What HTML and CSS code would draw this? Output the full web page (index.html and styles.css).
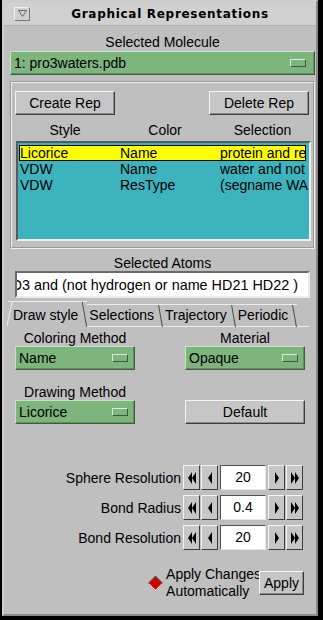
FILE: index.html
```html
<!DOCTYPE html>
<html lang="en">
<head>
    <meta charset="UTF-8">
    <title>Graphical Representations</title>
    <link rel="stylesheet" href="styles.css">
</head>
<body>
    <div class="window">
        <!-- Title bar -->
        <div class="titlebar">
            <span class="collapse">
                <svg width="9" height="7" viewBox="0 0 9 7"><polygon points="0.5,0.5 8.5,0.5 4.5,6.5" fill="none" stroke="#666" stroke-width="1"/></svg>
            </span>
            <span class="title">Graphical Representations</span>
        </div>

        <div class="content">
            <div class="label">Selected Molecule</div>
            <div class="menu wide"><span>1: pro3waters.pdb</span><i class="ind"></i></div>

            <!-- Reps group -->
            <div class="group">
                <div class="btn-row">
                    <div class="btn rep-btn">Create Rep</div>
                    <div class="btn rep-btn">Delete Rep</div>
                </div>
                <div class="list-head"><span>Style</span><span>Color</span><span>Selection</span></div>
                <div class="listbox">
                    <div class="row sel"><span>Licorice</span><span>Name</span><span>protein and re</span></div>
                    <div class="row"><span>VDW</span><span>Name</span><span>water and not</span></div>
                    <div class="row"><span>VDW</span><span>ResType</span><span>(segname WA</span></div>
                </div>
            </div>

            <div class="label atoms-label">Selected Atoms</div>
            <div class="entry"><span>O3 and (not hydrogen or name HD21 HD22 )</span></div>

            <!-- Tabs -->
            <div class="tabs">
                <div class="tab active">Draw style</div>
                <div class="tab">Selections</div>
                <div class="tab">Trajectory</div>
                <div class="tab">Periodic</div>
                <div class="tab-rest"></div>
            </div>

            <div class="page">
                <div class="opts">
                    <div class="opt">
                        <div class="label">Coloring Method</div>
                        <div class="menu"><span>Name</span><i class="ind"></i></div>
                    </div>
                    <div class="opt">
                        <div class="label">Material</div>
                        <div class="menu"><span>Opaque</span><i class="ind"></i></div>
                    </div>
                    <div class="opt">
                        <div class="label">Drawing Method</div>
                        <div class="menu"><span>Licorice</span><i class="ind"></i></div>
                    </div>
                    <div class="opt">
                        <div class="label">&nbsp;</div>
                        <div class="btn">Default</div>
                    </div>
                </div>

                <div class="spinners" id="spinners"></div>

                <div class="apply-row">
                    <span class="radio"></span>
                    <span class="apply-text">Apply Changes<br>Automatically</span>
                    <div class="btn apply-btn">Apply</div>
                </div>
            </div>
        </div>
    </div>

    <script src="app.js"></script>
</body>
</html>
```

FILE: app.js
```js
// build the three counter rows
const rows = [
    { label: 'Sphere Resolution', value: '20' },
    { label: 'Bond Radius', value: '0.4' },
    { label: 'Bond Resolution', value: '20' }
];

const single = '<svg width="6" height="14" viewBox="0 0 6 14"><polygon points="1,1 5,7 1,13" fill="#000"/></svg>';
const double = '<svg width="10" height="14" viewBox="0 0 10 14"><polygon points="1,1 5,7 1,13" fill="#000"/><polygon points="5,1 9,7 5,13" fill="#000"/></svg>';

const box = document.getElementById('spinners');
rows.forEach(r => {
    const row = document.createElement('div');
    row.classList.add('spin-row');
    row.innerHTML = `
        <span class="spin-label">${r.label}</span>
        <span class="arrow flip">${double}</span>
        <span class="arrow flip">${single}</span>
        <span class="spin-value">${r.value}</span>
        <span class="arrow">${single}</span>
        <span class="arrow">${double}</span>
    `;
    box.appendChild(row);
});
```

FILE: styles.css
```css
body {
    margin: 0;
    background-color: #000;
    font-family: 'Liberation Sans', Arial, sans-serif;
    font-size: 14px;
    color: #000;
}

.window {
    box-sizing: border-box;
    width: 316px;
    height: 616px;
    margin-left: 2px;
    background-color: #bfbfbf;
    border: 2px solid #cdcdcd;
    border-right-color: #8a8a8a;
    border-bottom-color: #8a8a8a;
}

.titlebar {
    display: flex;
    align-items: center;
    height: 23px;
    background-color: #d0d0d0;
    border-bottom: 1px solid #b4b4b4;
}

.collapse {
    display: flex;
    align-items: center;
    justify-content: center;
    box-sizing: border-box;
    width: 16px;
    height: 14px;
    margin-left: 10px;
    border: 1px solid #f0f0f0;
    border-right-color: #777;
    border-bottom-color: #777;
}

.title {
    flex: 1;
    text-align: center;
    padding-right: 6px;
    font-family: 'DejaVu Sans', sans-serif;
    font-weight: bold;
    font-size: 12px;
    letter-spacing: 0.7px;
}

.content {
    padding-left: 6px;
}

.label {
    text-align: center;
    height: 17px;
    line-height: 17px;
}

.content > .label:first-child {
    margin-top: 8px;
    width: 305px;
}

/* green option menus */
.menu {
    display: flex;
    align-items: center;
    justify-content: space-between;
    box-sizing: border-box;
    height: 24px;
    padding: 0 6px 0 3px;
    background-color: #7db57d;
    border: 1px solid #c4e2c4;
    border-right-color: #3e5e3e;
    border-bottom-color: #3e5e3e;
    box-shadow: inset -1px -1px 0 #5f8d5f;
}

.menu.wide {
    width: 305px;
    padding-right: 8px;
}

.ind {
    display: block;
    box-sizing: border-box;
    width: 16px;
    height: 8px;
    border: 1px solid #d6ecd6;
    border-right-color: #3a5a3a;
    border-bottom-color: #3a5a3a;
}

.group {
    box-sizing: border-box;
    width: 305px;
    height: 168px;
    margin-top: 6px;
    padding: 8px 3px 0 3px;
    border: 2px groove #eee;
}

.btn-row {
    display: flex;
    justify-content: space-between;
    padding-right: 1px;
}

.btn {
    box-sizing: border-box;
    height: 24px;
    line-height: 22px;
    text-align: center;
    background-color: #c6c6c6;
    border: 1px solid #f4f4f4;
    border-right-color: #3c3c3c;
    border-bottom-color: #3c3c3c;
    box-shadow: inset -1px -1px 0 #8c8c8c;
}

.rep-btn {
    width: 100px;
}

.list-head {
    display: grid;
    grid-template-columns: 100px 100px 95px;
    margin-top: 7px;
    height: 16px;
    line-height: 16px;
    text-align: center;
}

.listbox {
    box-sizing: border-box;
    width: 295px;
    height: 100px;
    margin-top: 3px;
    margin-left: 1px;
    padding: 2px 3px 0 1px;
    background-color: #3db3be;
    border: 2px solid #5a5a5a;
    border-right-color: #f0f0f0;
    border-bottom-color: #f0f0f0;
    overflow: hidden;
}

.row {
    display: grid;
    grid-template-columns: 100px 100px 88px;
    height: 16px;
    line-height: 16px;
    padding-left: 1px;
    white-space: nowrap;
}

.row.sel {
    box-sizing: border-box;
    background-color: #ffff00;
    border: 1px solid #000;
    padding-left: 0;
    line-height: 14px;
}

.atoms-label {
    margin-top: 6px;
    width: 305px;
    height: 16px;
    line-height: 16px;
}

.entry {
    display: flex;
    justify-content: flex-end;
    align-items: center;
    box-sizing: border-box;
    width: 295px;
    height: 27px;
    margin-left: 5px;
    padding-right: 10px;
    background-color: #fff;
    border: 2px solid #6a6a6a;
    border-right-color: #ececec;
    border-bottom-color: #ececec;
    font-size: 14.4px;
    white-space: nowrap;
    overflow: hidden;
}

/* notebook tabs */
.tabs {
    display: flex;
    align-items: flex-end;
    height: 24px;
    margin-top: 5px;
    margin-left: -2px;
}

.tab {
    position: relative;
    height: 21px;
    line-height: 21px;
    padding: 0 9px 0 2px;
    border-top: 1px solid #ececec;
    border-bottom: 1px solid #ececec;
}

.tab::after {
    content: "";
    position: absolute;
    top: 0;
    bottom: -1px;
    right: 2px;
    border-right: 1px solid #4a4a4a;
    transform: skewX(10deg);
}

.tab.active {
    height: 24px;
    line-height: 26px;
    padding-left: 5px;
    border-bottom-color: transparent;
}

.tab.active::before {
    content: "";
    position: absolute;
    top: 0;
    bottom: 0;
    left: 1px;
    border-left: 1px solid #ececec;
    transform: skewX(-12deg);
}

.tab-rest {
    width: 12px;
    border-bottom: 1px solid #ececec;
}

.page {
    width: 300px;
}

.opts {
    display: grid;
    grid-template-columns: 120px 120px;
    column-gap: 50px;
    row-gap: 14px;
    padding-left: 5px;
    margin-top: 3px;
}

.opts .label {
    height: 16px;
    line-height: 16px;
}

.spinners {
    display: flex;
    flex-direction: column;
    align-items: flex-end;
    gap: 5px;
    margin-top: 41px;
    padding-right: 6px;
}

.spin-row {
    display: flex;
    align-items: center;
    height: 25px;
}

.spin-label {
    margin-right: 2px;
}

.arrow {
    display: flex;
    align-items: center;
    justify-content: center;
    box-sizing: border-box;
    width: 17px;
    height: 25px;
    margin-right: 1px;
    background-color: #c6c6c6;
    border: 1px solid #f4f4f4;
    border-right-color: #3c3c3c;
    border-bottom-color: #3c3c3c;
}

.arrow.flip svg {
    transform: scaleX(-1);
}

.spin-value {
    box-sizing: border-box;
    width: 46px;
    height: 25px;
    line-height: 23px;
    margin: 0 2px 0 1px;
    text-align: center;
    background-color: #fff;
    border: 1px solid #505050;
    border-right-color: #e8e8e8;
    border-bottom-color: #e8e8e8;
}

.apply-row {
    display: flex;
    align-items: center;
    justify-content: flex-end;
    margin-top: 16px;
    padding-right: 6px;
}

.radio {
    width: 9px;
    height: 9px;
    margin-right: 5px;
    background-color: #d00000;
    border: 1px solid #555;
    border-right-color: #f0f0f0;
    border-bottom-color: #f0f0f0;
    transform: rotate(45deg);
}

.apply-text {
    line-height: 17px;
}

.apply-btn {
    width: 45px;
    margin-left: -2px;
}
```
